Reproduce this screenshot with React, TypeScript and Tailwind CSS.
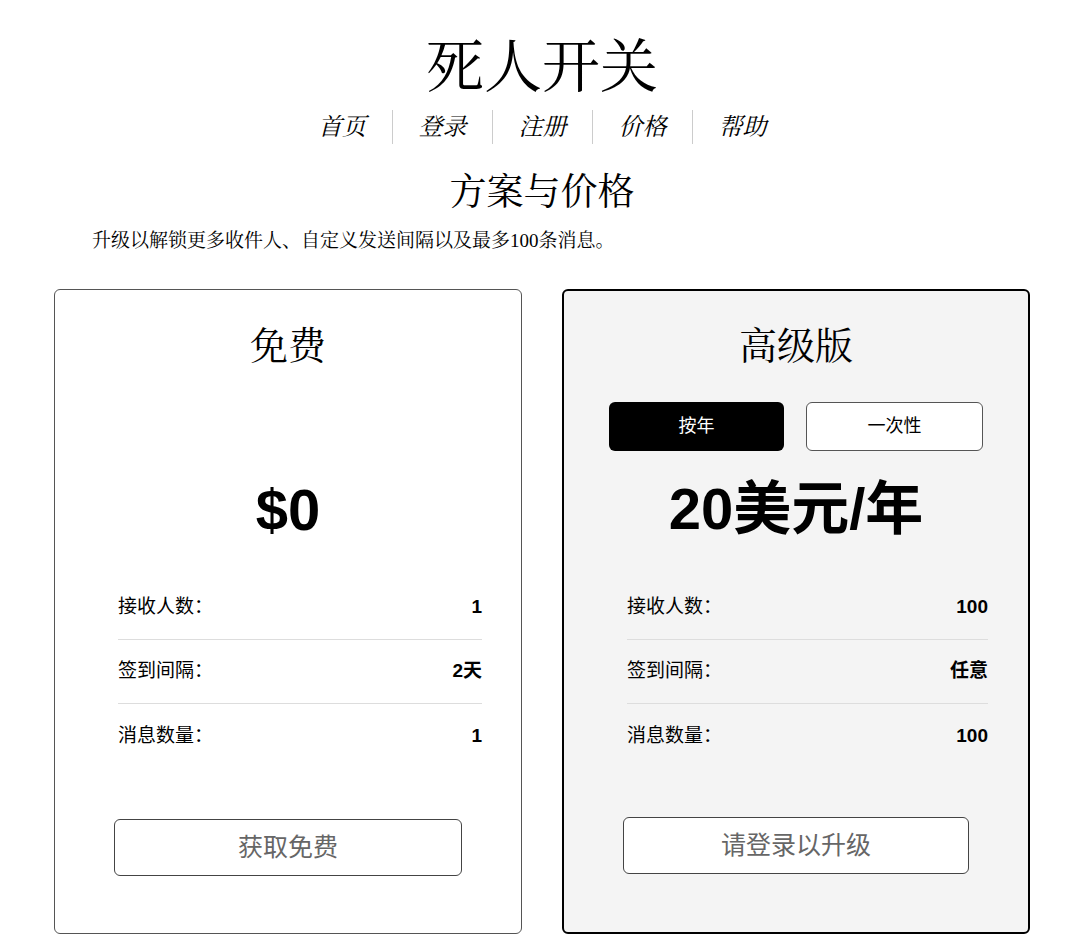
import React from "react";

function Row({ label, value, last }: { label: string; value: string; last?: boolean }) {
  return (
    <div className={`flex h-[64px] items-center justify-between ${last ? "" : "border-b border-[#dddddd]"}`}>
      <span className="text-[19px] font-normal text-black [text-spacing-trim:space-all]">{label}</span>
      <span className="text-[19px] font-bold text-black">{value}</span>
    </div>
  );
}

const serifCls = "font-['Liberation_Serif','Noto_Serif_CJK_SC','Noto_Sans_CJK_SC',serif]";

export default function App() {
  const nav = ["首页", "登录", "注册", "价格", "帮助"];
  return (
    <div className="min-h-[950px] w-[1080px] bg-white text-black font-['Liberation_Sans','Noto_Sans_CJK_SC',sans-serif]">
      <div className="ml-[54px] w-[976px]">
        <h1 className={`pt-[34px] text-center text-[58px] leading-[68px] font-normal ${serifCls}`}>死人开关</h1>
        <nav className="mt-[8px] flex justify-center">
          {nav.map((n, i) => (
            <a
              key={n}
              className={`flex h-[34px] w-[100px] items-center justify-center text-[24px] italic ${serifCls} ${
                i > 0 ? "border-l border-[#cccccc]" : ""
              }`}
            >
              {n}
            </a>
          ))}
        </nav>
        <h2 className={`mt-[26px] text-center text-[37px] leading-[46px] font-normal ${serifCls}`}>方案与价格</h2>
        <p className={`mt-[12px] pl-[38px] text-[19px] leading-[26px] ${serifCls}`}>
          升级以解锁更多收件人、自定义发送间隔以及最多100条消息。
        </p>
        <div className="mt-[35px] grid grid-cols-2 gap-[40px]">
          {/* Free */}
          <div className="flex h-[645px] flex-col rounded-md border border-[#555555] bg-white">
            <h3 className={`pt-[33px] text-center text-[38px] leading-[46px] font-normal ${serifCls}`}>免费</h3>
            <div className="mt-[33px] h-[49px]" />
            <div className="mt-[25px] text-center text-[58px] leading-[67px] font-bold">$0</div>
            <div className="mt-[33px] ml-[63px] mr-[39px]">
              <Row label="接收人数：" value="1" />
              <Row label="签到间隔：" value="2天" />
              <Row label="消息数量：" value="1" last />
            </div>
            <button className="mx-[59px] mt-[51px] h-[57px] rounded-md border border-[#444444] bg-white text-[25px] font-normal text-[#666666]">
              获取免费
            </button>
          </div>
          {/* Premium */}
          <div className="flex h-[645px] flex-col rounded-md border-2 border-black bg-[#f4f4f4]">
            <h3 className={`pt-[32px] text-center text-[38px] leading-[46px] font-normal ${serifCls}`}>高级版</h3>
            <div className="mt-[33px] flex gap-[22px] px-[45px]">
              <button className="h-[49px] flex-1 rounded-md bg-black text-[18px] text-white">按年</button>
              <button className="h-[49px] flex-1 rounded-md border border-[#555555] bg-white text-[18px] text-black">
                一次性
              </button>
            </div>
            <div className="mt-[24px] text-center text-[58px] leading-[67px] font-bold">20美元/年</div>
            <div className="mt-[34px] ml-[63px] mr-[40px]">
              <Row label="接收人数：" value="100" />
              <Row label="签到间隔：" value="任意" />
              <Row label="消息数量：" value="100" last />
            </div>
            <button className="ml-[59px] mr-[59px] mt-[49px] h-[57px] rounded-md border border-[#444444] bg-white text-[25px] font-normal text-[#666666]">
              请登录以升级
            </button>
          </div>
        </div>
      </div>
    </div>
  );
}
